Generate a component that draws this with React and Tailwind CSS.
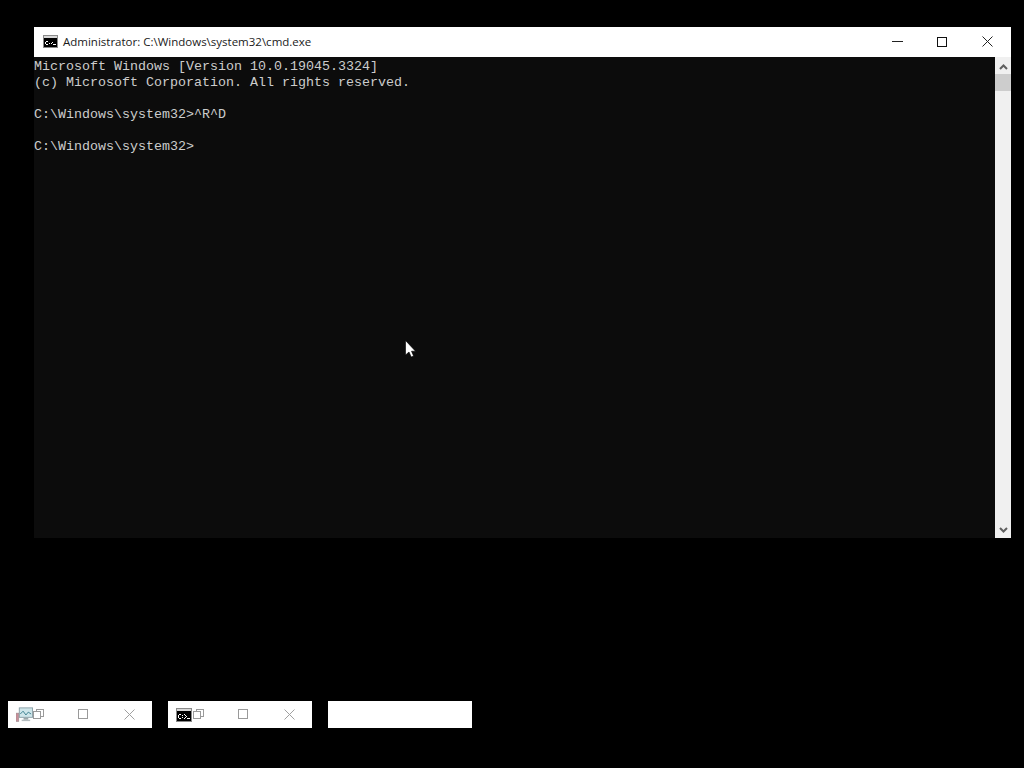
function CmdIcon({ className }) {
  return (
    <svg className={className} width="16" height="14" viewBox="0 0 16 14" shapeRendering="crispEdges">
      <rect x="0" y="0" width="16" height="14" fill="#8a8a8a" />
      <rect x="1" y="1" width="14" height="2" fill="#d8d8d8" />
      <rect x="1" y="3" width="14" height="10" fill="#000" />
      <path d="M3 6h2v1H3zM2 7h1v3H2zM3 10h2v1H3zM6 7h1v1H6zM6 9h1v1H6zM8 6h1v1H8zM9 7h1v1H9zM10 8h1v1H10zM9 9h1v1H9zM8 10h1v1H8zM11 10h3v1h-3z" fill="#fff" />
    </svg>
  );
}

function RestoreIcon() {
  return (
    <svg width="11" height="11" viewBox="0 0 11 11" fill="none" stroke="#9a9a9a" shapeRendering="crispEdges">
      <rect x="0.5" y="2.5" width="7" height="7" />
      <path d="M3 2.5V0.5H10.5V7.5H8" />
    </svg>
  );
}

function PerfIcon() {
  return (
    <svg width="18" height="15" viewBox="0 0 18 15">
      <rect x="3.5" y="0.5" width="14" height="10" fill="#cfe6ea" stroke="#8ba0a8" />
      <path d="M4.5 7l3-3 3 4 2.5-3 3 2" fill="none" stroke="#3b7f8f" />
      <rect x="8" y="11" width="5" height="2" fill="#9aa6aa" />
      <rect x="6" y="13" width="9" height="1.5" fill="#b4bcbf" />
      <rect x="0" y="6" width="3" height="9" fill="#c98f9a" stroke="#8d8d8d" strokeWidth="0.5" />
    </svg>
  );
}

function Thumb({ icon }) {
  return (
    <div className="w-[144px] h-[27px] bg-white flex items-center">
      {icon && (
        <>
          <div className="w-[17px] ml-[8px] flex justify-start">{icon}</div>
          <div className="mt-[-1px] flex"><RestoreIcon /></div>
          <div className="ml-[34px] w-[10px] h-[10px] border border-[#9a9a9a] mt-[-1px]" />
          <svg className="ml-[36px] mt-[-1px]" width="11" height="11" viewBox="0 0 11 11" stroke="#a0a0a0" fill="none">
            <path d="M0.5 0.5L10.5 10.5M10.5 0.5L0.5 10.5" />
          </svg>
        </>
      )}
    </div>
  );
}

export default function App() {
  return (
    <div className="w-[1024px] h-[768px] bg-black overflow-hidden relative pt-[27px]">
      <div className="ml-[34px] w-[977px] h-[511px] flex flex-col">
        <div className="h-[30px] bg-white flex items-center shrink-0">
          <CmdIcon className="ml-[9px] w-[15px] h-[13px] mt-[-1px]" />
          <span className="ml-[5px] mt-[-1px] text-[11.5px] text-[#1a1a1a] whitespace-nowrap [font-family:'Open_Sans','Noto_Sans',sans-serif]">
            Administrator: C:\Windows\system32\cmd.exe
          </span>
          <div className="ml-auto flex items-center mt-[-1px]">
            <svg width="11" height="11" viewBox="0 0 11 11" stroke="#222" fill="none" shapeRendering="crispEdges" className="mr-[34px]">
              <path d="M0 5.5H11" />
            </svg>
            <div className="w-[10px] h-[10px] border border-[#111] mr-[35px]" />
            <svg width="11" height="11" viewBox="0 0 11 11" stroke="#222" fill="none" className="mr-[18px]">
              <path d="M0.5 0.5L10.5 10.5M10.5 0.5L0.5 10.5" />
            </svg>
          </div>
        </div>
        <div className="flex-1 flex min-h-0">
          <pre className="flex-1 bg-[#0c0c0c] text-[#cccccc] text-[13.33px] leading-[16px] pt-[2px] m-0 [font-family:'Liberation_Mono',monospace]">{`Microsoft Windows [Version 10.0.19045.3324]
(c) Microsoft Corporation. All rights reserved.

C:\\Windows\\system32>^R^D

C:\\Windows\\system32>`}</pre>
          <div className="w-[16px] bg-[#f0f0f0] flex flex-col items-center shrink-0">
            <svg className="mt-[7px]" width="9" height="6" viewBox="0 0 9 6" fill="none" stroke="#606060" strokeWidth="2">
              <path d="M1 5L4.5 1.5L8 5" />
            </svg>
            <div className="w-full h-[17px] bg-[#cdcdcd] mt-[4px]" />
            <svg className="mt-auto mb-[5px]" width="9" height="6" viewBox="0 0 9 6" fill="none" stroke="#606060" strokeWidth="2">
              <path d="M1 1L4.5 4.5L8 1" />
            </svg>
          </div>
        </div>
      </div>
      <div className="mt-[163px] ml-[8px] flex gap-[16px]">
        <Thumb icon={<PerfIcon />} />
        <Thumb icon={<CmdIcon />} />
        <Thumb />
      </div>
      <svg className="absolute left-[405px] top-[340px]" width="11" height="18" viewBox="0 0 11 18">
        <path d="M0.5 0.5V15L4 12L6.2 17L8.6 16L6.5 11.2H10.5Z" fill="#fff" stroke="#000" strokeWidth="0.6" />
      </svg>
    </div>
  );
}
